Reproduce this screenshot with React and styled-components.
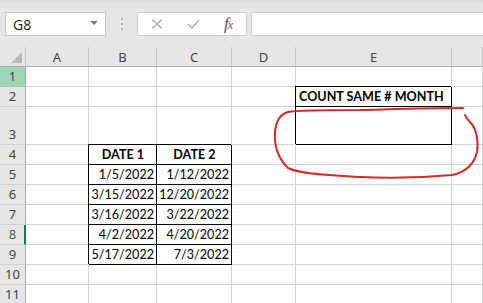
import React from "react";
import styled, { createGlobalStyle, css } from "styled-components";

const GlobalStyle = createGlobalStyle`
  html, body { margin: 0; padding: 0; background: #ffffff; }
  * { box-sizing: border-box; }
`;

const Wrapper = styled.div`
  position: relative;
  width: 483px;
  height: 303px;
  overflow: hidden;
  background: #ffffff;
  font-family: "Segoe UI", "Noto Sans", "Open Sans", sans-serif;
`;

const Toolbar = styled.div`
  height: 47px;
  background: linear-gradient(#d9d9d9 0px, #e3e3e3 3px, #e6e6e6 5px, #e6e6e6 100%);
  display: flex;
  align-items: flex-start;
  padding: 12px 0 0 5px;
`;

const NameBox = styled.div`
  width: 101px;
  height: 24px;
  background: #ffffff;
  border: 1px solid #c6c6c6;
  display: flex;
  align-items: center;
  justify-content: space-between;
  padding: 0 7px 0 7px;
  font-family: "Open Sans", "Noto Sans", sans-serif;
  font-size: 14px;
  color: #222;
`;

const Caret = styled.span`
  width: 0;
  height: 0;
  border-left: 4px solid transparent;
  border-right: 4px solid transparent;
  border-top: 4px solid #7a7a7a;
  margin-top: -2px;
`;

const Grip = styled.div`
  width: 31px;
  height: 24px;
  display: flex;
  flex-direction: column;
  align-items: center;
  justify-content: center;
  gap: 3px;
`;

const Dot = styled.span`
  width: 2px;
  height: 2px;
  background: #b4b4b4;
`;

const FxGroup = styled.div`
  width: 110px;
  height: 24px;
  background: #ffffff;
  border: 1px solid #cfcfcf;
  display: flex;
  align-items: center;
  padding-left: 12px;
  gap: 22px;
`;

const IconBtn = styled.span`
  display: flex;
  align-items: center;
  justify-content: center;
  width: 14px;
  height: 14px;
`;

const Fx = styled.span`
  font-family: "Liberation Serif", "DejaVu Serif", serif;
  font-style: italic;
  color: #555;
  font-size: 17px;
  letter-spacing: -1px;
  margin-left: 2px;
  small { font-size: 12px; }
`;

const FormulaInput = styled.div`
  flex: 1;
  height: 24px;
  margin-left: 4px;
  background: #ffffff;
  border: 1px solid #cfcfcf;
  border-right: none;
`;

const Sheet = styled.div`
  display: grid;
  grid-template-columns: 26px 63px 68px 75px 64px 156px 1fr;
  grid-template-rows: 20px 20px 20px 38px repeat(8, 20px);
`;

const Corner = styled.div`
  position: relative;
  background: #e6e6e6;
  border-right: 1px solid #c8c8c8;
  border-bottom: 1px solid #ababab;
  svg { position: absolute; right: 3px; bottom: 3px; }
`;

const ColHead = styled.div`
  background: #e6e6e6;
  border-right: 1px solid #c8c8c8;
  border-bottom: 1px solid #ababab;
  display: flex;
  align-items: center;
  justify-content: center;
  font-size: 13px;
  color: #444;
  padding-top: 1px;
`;

const RowHead = styled.div`
  background: ${(p) => (p.$active ? "#9fd5b7" : "#e6e6e6")};
  border-right: ${(p) => (p.$current ? "2px solid #217346" : "1px solid #ababab")};
  border-bottom: 1px solid ${(p) => (p.$active ? "#9fc9b0" : "#d0d0d0")};
  display: flex;
  align-items: flex-end;
  justify-content: center;
  padding-bottom: 1px;
  padding-left: ${(p) => (p.$current ? "1px" : "0")};
  font-size: 13px;
  line-height: 17px;
  color: ${(p) => (p.$current ? "#3b6b51" : "#444")};
`;

const Cell = styled.div`
  border-right: 1px solid #d4d4d4;
  border-bottom: 1px solid #d4d4d4;
  display: flex;
  align-items: flex-end;
  justify-content: ${(p) => (p.$align === "center" ? "center" : p.$align === "right" ? "flex-end" : "flex-start")};
  padding: 0 2px 1px 3px;
  font-family: "Lato", "Open Sans", sans-serif;
  font-size: 12.6px;
  line-height: 17px;
  color: #000;
  white-space: nowrap;
  font-weight: ${(p) => (p.$bold ? 700 : 400)};
  ${(p) =>
    p.$box &&
    css`
      border-right-color: #000;
      border-bottom-color: #000;
      box-shadow: -1px -1px 0 0 #000;
    `}
`;

const Annotation = styled.svg`
  position: absolute;
  left: 0;
  top: 0;
  pointer-events: none;
`;

const COLS = ["A", "B", "C", "D", "E", ""];

const ROWS = [
  { n: 1, active: true },
  { n: 2, cells: { E: { t: "COUNT SAME # MONTH", bold: true, box: true } } },
  { n: 3, cells: { E: { t: "", box: true } } },
  {
    n: 4,
    cells: {
      B: { t: "DATE 1", bold: true, box: true, align: "center" },
      C: { t: "DATE 2", bold: true, box: true, align: "center" },
    },
  },
  ["1/5/2022", "1/12/2022"],
  ["3/15/2022", "12/20/2022"],
  ["3/16/2022", "3/22/2022"],
  ["4/2/2022", "4/20/2022"],
  ["5/17/2022", "7/3/2022"],
].map((r, i) =>
  Array.isArray(r)
    ? {
        n: i + 1,
        current: i + 1 === 8,
        cells: {
          B: { t: r[0], box: true, align: "right" },
          C: { t: r[1], box: true, align: "right" },
        },
      }
    : r
);
ROWS.push({ n: 10 }, { n: 11 });

const ColKeys = ["A", "B", "C", "D", "E", "F"];

export default function App() {
  return (
    <Wrapper>
      <GlobalStyle />
      <Toolbar>
        <NameBox>
          <span>G8</span>
          <Caret />
        </NameBox>
        <Grip>
          <Dot />
          <Dot />
          <Dot />
        </Grip>
        <FxGroup>
          <IconBtn>
            <svg width="12" height="10" viewBox="0 0 12 10">
              <path d="M1 0.5 L11 9.5 M11 0.5 L1 9.5" stroke="#a8a8a8" strokeWidth="1.3" fill="none" />
            </svg>
          </IconBtn>
          <IconBtn>
            <svg width="13" height="10" viewBox="0 0 13 10">
              <path d="M1 5 L5 9 L12 1" stroke="#a8a8a8" strokeWidth="1.4" fill="none" />
            </svg>
          </IconBtn>
          <Fx>
            f<small>x</small>
          </Fx>
        </FxGroup>
        <FormulaInput />
      </Toolbar>
      <Sheet>
        <Corner>
          <svg width="11" height="11" viewBox="0 0 11 11">
            <path d="M11 0 L11 11 L0 11 Z" fill="#b9b9b9" />
          </svg>
        </Corner>
        {COLS.map((c, i) => (
          <ColHead key={i}>{c}</ColHead>
        ))}
        {ROWS.map((row) => (
          <React.Fragment key={row.n}>
            <RowHead $active={row.active} $current={row.current}>
              {row.n}
            </RowHead>
            {ColKeys.map((k) => {
              const c = (row.cells && row.cells[k]) || null;
              return (
                <Cell key={k} $box={c && c.box} $bold={c && c.bold} $align={c && c.align}>
                  {c ? c.t : ""}
                </Cell>
              );
            })}
          </React.Fragment>
        ))}
      </Sheet>
      <Annotation width="483" height="303" viewBox="0 0 483 303">
        <path
          d="M463 108 C430 108 400 109 360 110 C330 110 300 110 288 112 C280 114 276 122 275 132 C274 145 278 158 288 168 C300 174 330 175 360 177 C400 179 430 177 452 175 C466 172 474 165 477 152 C479 140 476 128 470 122 C468 120 466 118 465 115"
          stroke="#d42a2a"
          strokeWidth="2"
          fill="none"
          strokeLinecap="round"
        />
      </Annotation>
    </Wrapper>
  );
}
